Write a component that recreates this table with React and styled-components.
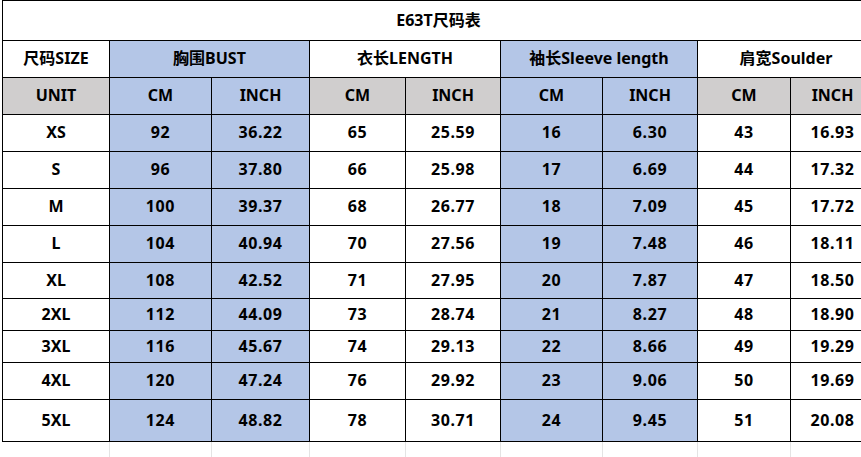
import React from 'react';
import styled, { createGlobalStyle } from 'styled-components';

const GlobalStyle = createGlobalStyle`
  html, body {
    margin: 0;
    padding: 0;
    background: #ffffff;
    overflow: hidden;
  }
  body {
    font-family: "Noto Sans", "Noto Sans CJK SC", sans-serif;
  }
`;

const fills = {
  blue: '#b4c6e7',
  grey: '#d0cece',
  white: '#ffffff',
};

const Sheet = styled.div`
  width: 861px;
  height: 457px;
  overflow: hidden;
  padding-left: 2px;
  box-sizing: border-box;
`;

const Grid = styled.table`
  border-collapse: collapse;
  table-layout: fixed;
  width: 872px;
  font-size: 16px;
  font-weight: 700;
  color: #000;
`;

const Row = styled.tr`
  height: ${p => p.$h}px;
`;

const Cell = styled.td`
  border: 1px solid #000;
  background: ${p => fills[p.$fill || 'white']};
  text-align: center;
  vertical-align: middle;
  padding: 0 0 2px;
  white-space: nowrap;
  overflow: hidden;
  line-height: 1;
  letter-spacing: ${p => (p.$num ? '0.6px' : '0')};
`;

const Blank = styled.td`
  border-top: none;
  border-bottom: none;
  border-left: 1px solid #e4e4e4;
  border-right: 1px solid #e4e4e4;
  padding: 0;
  &:first-child {
    border-left: none;
  }
`;

const widths = [107, 102, 98, 96, 95, 102, 95, 93, 84];

const groups = [
  { label: '胸围BUST', fill: 'blue', unitFill: 'blue' },
  { label: '衣长LENGTH', fill: 'white', unitFill: 'grey' },
  { label: '袖长Sleeve length', fill: 'blue', unitFill: 'blue' },
  { label: '肩宽Soulder', fill: 'white', unitFill: 'grey' },
];

// size, bust cm/in, length cm/in, sleeve cm/in, shoulder cm/in, row height
const sizes = [
  ['XS', 92, '36.22', 65, '25.59', 16, '6.30', 43, '16.93', 37],
  ['S', 96, '37.80', 66, '25.98', 17, '6.69', 44, '17.32', 37],
  ['M', 100, '39.37', 68, '26.77', 18, '7.09', 45, '17.72', 37],
  ['L', 104, '40.94', 70, '27.56', 19, '7.48', 46, '18.11', 37],
  ['XL', 108, '42.52', 71, '27.95', 20, '7.87', 47, '18.50', 36],
  ['2XL', 112, '44.09', 73, '28.74', 21, '8.27', 48, '18.90', 32],
  ['3XL', 116, '45.67', 74, '29.13', 22, '8.66', 49, '19.29', 32],
  ['4XL', 120, '47.24', 76, '29.92', 23, '9.06', 50, '19.69', 37],
  ['5XL', 124, '48.82', 78, '30.71', 24, '9.45', 51, '20.08', 42],
];

const colFills = ['blue', 'blue', 'white', 'white', 'blue', 'blue', 'white', 'white'];

export default function App() {
  return (
    <>
      <GlobalStyle />
      <Sheet>
        <Grid>
          <colgroup>
            {widths.map((w, i) => <col key={i} style={{ width: w }} />)}
          </colgroup>
          <tbody>
            <Row $h={40}>
              <Cell colSpan={9}>E63T尺码表</Cell>
            </Row>
            <Row $h={37}>
              <Cell>尺码SIZE</Cell>
              {groups.map(g => (
                <Cell key={g.label} colSpan={2} $fill={g.fill}>{g.label}</Cell>
              ))}
            </Row>
            <Row $h={37}>
              <Cell $fill="grey">UNIT</Cell>
              {groups.map(g => (
                <React.Fragment key={g.label}>
                  <Cell $fill={g.unitFill}>CM</Cell>
                  <Cell $fill={g.unitFill}>INCH</Cell>
                </React.Fragment>
              ))}
            </Row>
            {sizes.map(s => (
              <Row key={s[0]} $h={s[9]}>
                <Cell>{s[0]}</Cell>
                {s.slice(1, 9).map((v, i) => (
                  <Cell key={i} $fill={colFills[i]} $num>{v}</Cell>
                ))}
              </Row>
            ))}
            <Row $h={20}>
              {widths.map((w, i) => <Blank key={i} />)}
            </Row>
          </tbody>
        </Grid>
      </Sheet>
    </>
  );
}
